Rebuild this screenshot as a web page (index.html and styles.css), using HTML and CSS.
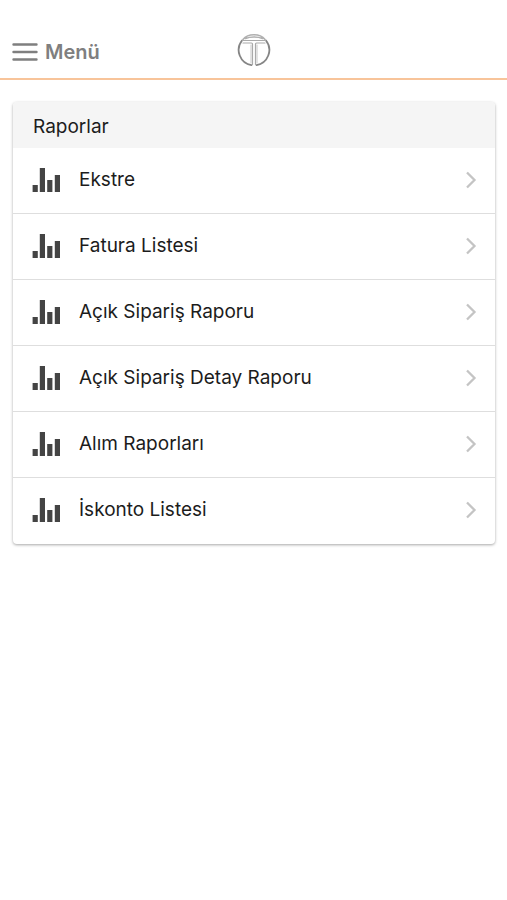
FILE: index.html
```html
<!DOCTYPE html>
<html lang="tr">
<head>
<meta charset="utf-8">
<meta name="viewport" content="width=device-width, initial-scale=1">
<title>Raporlar</title>
<link rel="stylesheet" href="styles.css">
</head>
<body>
<svg class="sprite" aria-hidden="true">
  <symbol id="bars" viewBox="0 0 28 26">
    <path fill="currentColor" d="M.6 18h5.200v7H.6zM7.800 1H13v24H7.800zM15.200 13h5.200v12h-5.200zM22.800 8H28v17h-5.200z"/>
  </symbol>
  <symbol id="chevron" viewBox="0 0 12 18">
    <path fill="none" stroke="currentColor" stroke-width="2.300" d="M2 1.500 9.500 9 2 16.500"/>
  </symbol>
</svg>
<header class="topbar">
  <button class="menu" type="button">
    <svg class="menu-icon" viewBox="0 0 26 18" aria-hidden="true"><path stroke="currentColor" stroke-width="2.400" stroke-linecap="round" d="M1.500 1.500h23M1.500 9h23M1.500 16.500h23"/></svg>
    <span>Menü</span>
  </button>
  <svg class="logo" viewBox="0 0 34 34" role="img" aria-label="Logo">
    <g fill="none" stroke-linecap="round">
      <path stroke="#858585" stroke-width="1.800" d="M5 7.500A15.400 15.400 0 0 0 14.500 32.200M29 7.500A15.400 15.400 0 0 1 19.500 32.200"/>
      <path stroke="#b0b0b0" stroke-width="1.600" d="M6 6.500C11 .2 23 .2 28 6.500M8.500 5.500C13 3.500 21 3.500 25.500 5.500"/>
      <path stroke="#aaa" stroke-width="1.200" d="M5.500 7.500h23M6 10h8.500q1 0 1 1v20.500M28 10h-8.500q-1 0-1 1v20.500"/>
      <path stroke="#c8c8c8" stroke-width="1" d="M14 12v18M20 12v18"/>
    </g>
  </svg>
</header>
<main class="content">
  <section class="card">
    <h1 class="card-title">Raporlar</h1>
    <nav class="list">
      <a class="row" href="#"><svg class="bars"><use href="#bars"/></svg><span class="label">Ekstre</span><svg class="chevron"><use href="#chevron"/></svg></a>
      <a class="row" href="#"><svg class="bars"><use href="#bars"/></svg><span class="label">Fatura Listesi</span><svg class="chevron"><use href="#chevron"/></svg></a>
      <a class="row" href="#"><svg class="bars"><use href="#bars"/></svg><span class="label">Açık Sipariş Raporu</span><svg class="chevron"><use href="#chevron"/></svg></a>
      <a class="row" href="#"><svg class="bars"><use href="#bars"/></svg><span class="label">Açık Sipariş Detay Raporu</span><svg class="chevron"><use href="#chevron"/></svg></a>
      <a class="row" href="#"><svg class="bars"><use href="#bars"/></svg><span class="label">Alım Raporları</span><svg class="chevron"><use href="#chevron"/></svg></a>
      <a class="row" href="#"><svg class="bars"><use href="#bars"/></svg><span class="label">İskonto Listesi</span><svg class="chevron"><use href="#chevron"/></svg></a>
    </nav>
  </section>
</main>
</body>
</html>
```
FILE: styles.css
```css
* {
  box-sizing: border-box;
}

body {
  margin: 0;
  background: #fff;
  color: #1c1c1c;
  font-family: Inter, "Liberation Sans", sans-serif;
  font-size: 19px;
  line-height: 24px;
}

.sprite {
  position: absolute;
  width: 0;
  height: 0;
}

.topbar {
  display: grid;
  grid-template-columns: 1fr auto 1fr;
  align-items: center;
  padding: 33px 12px 11px;
  border-bottom: 2px solid #f8c49a;
}

.menu {
  display: flex;
  align-items: center;
  justify-self: start;
  gap: 7px;
  padding: 4px 0 0;
  border: 0;
  background: none;
  color: #7f7f7f;
  font: inherit;
  font-size: 20px;
  font-weight: 600;
}

.menu-icon {
  width: 26px;
  height: 18px;
}

.logo {
  width: 34px;
  height: 34px;
}

.content {
  padding: 22px 12px 24px 13px;
}

.card {
  overflow: hidden;
  border-radius: 4px;
  background: #fff;
  box-shadow: 0 1px 3px rgba(0, 0, 0, 0.35);
}

.card-title {
  margin: 0;
  padding: 13px 20px 9px;
  background: #f5f5f5;
  font-size: 19px;
  font-weight: 400;
}

.row {
  display: flex;
  align-items: center;
  height: 66px;
  padding: 0 18px 2px 19px;
  border-bottom: 1px solid #dedede;
  color: inherit;
  text-decoration: none;
}

.row:last-child {
  border-bottom-color: transparent;
}

.bars {
  width: 28px;
  height: 26px;
  color: #444;
}

.label {
  flex: 1;
  padding: 0 12px 0 19px;
}

.chevron {
  width: 12px;
  height: 18px;
  color: #c4c4c4;
}
```
